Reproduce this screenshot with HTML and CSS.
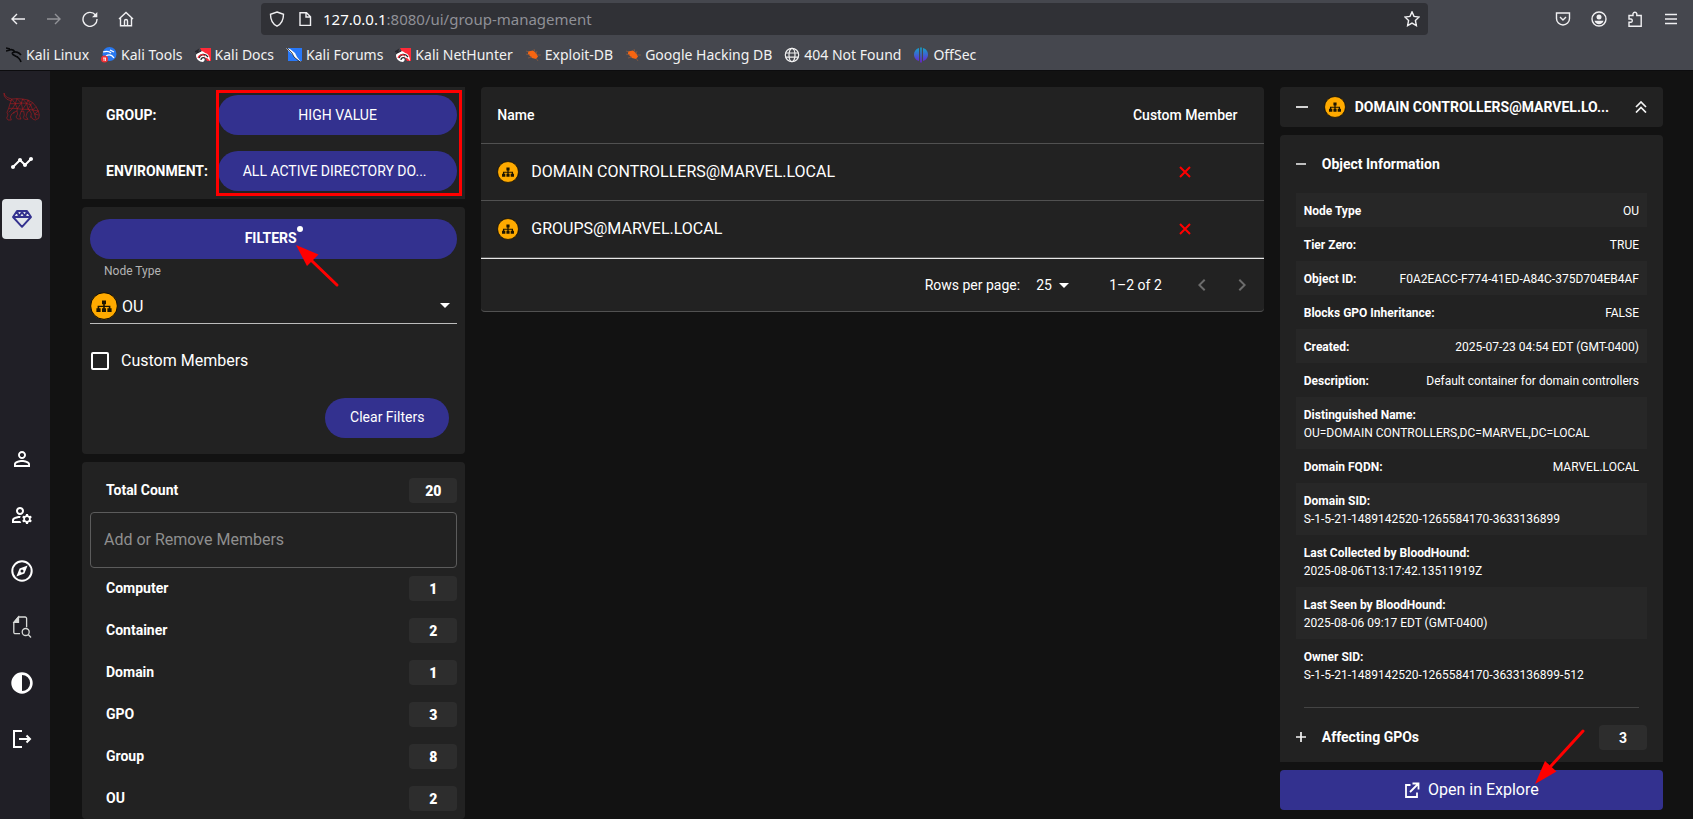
FILE: index.html
```html
<!DOCTYPE html>
<html lang="en">
<head>
<meta charset="utf-8">
<title>BloodHound - Group Management</title>
<link rel="stylesheet" href="styles.css">
</head>
<body>
<svg class="sprite" aria-hidden="true">
  <symbol id="ou" viewBox="0 0 28 28">
    <circle cx="14" cy="14" r="13.300" fill="#ffaa00" stroke="#000" stroke-width=".9"/>
    <path d="M12 8.400h4v3.800h-1.200v1.600h5.600v2.400h1.200V20h-4.200v-3.800h1.400v-1.100h-4v1.100H16V20h-4v-3.800h1.200v-1.100h-4v1.100h1.400V20H6.400v-3.800h1.200v-2.400h5.600v-1.600H12z" fill="#1c1400"/>
  </symbol>
  <symbol id="kali-docs" viewBox="0 0 16 16">
    <path d="M5 1h11v13h-4z" fill="#ff2a38"/>
    <path d="M1 8C2 4 8 3 10 6c3 0 5 4 5 8-2-3-4-4-6-3 1 1 1 3-1 4-4 0-7-3-7-7z" fill="#fff"/>
    <path d="M0 5l3-2-1 3 4-2M4 11c1-4 6-5 9-1M6 13c0-2 2-3 4-2" fill="none" stroke="#27262b" stroke-width="1.3"/>
    <path d="M3 11c1-4 5-4 7-2" fill="none" stroke="#ff2a38" stroke-width="1.2"/>
  </symbol>
  <symbol id="bug" viewBox="0 0 16 16">
    <path d="M3 4.500l5-1 3 2.500 2 3.500-2 2.500-4-1-4-4z" fill="#f76510"/>
    <path d="M1 7l4 1M3 11l4-1M9 2l1 3M12 4l-1 3M12 8h4M11 11l2 3M1 4l3 1" stroke="#8a5a40" stroke-width=".8"/>
  </symbol>
</svg>

<header class="browser">
  <div class="toolbar">
    <nav class="history" aria-label="History">
      <button class="tool" aria-label="Back"><svg viewBox="0 0 16 16"><path d="M15 8H2M7 3L2 8l5 5"/></svg></button>
      <button class="tool dim" aria-label="Forward"><svg viewBox="0 0 16 16"><path d="M1 8h13M9 3l5 5-5 5"/></svg></button>
      <button class="tool" aria-label="Reload"><svg viewBox="0 0 16 16"><path d="M13.500 4A7 7 0 1 0 15 8"/><path class="solid" d="M15.300 1v5.200H10z"/></svg></button>
      <button class="tool" aria-label="Home"><svg viewBox="0 0 16 16"><path d="M1 8l7-6.500L15 8M2.500 7v7.800h11V7M6.500 14.500V10a1.500 1.500 0 0 1 3 0v4.500"/></svg></button>
    </nav>
    <div class="urlbar">
      <svg class="tool-icon" viewBox="0 0 16 16"><path d="M8 1l6.500 2.300c0 5.500-1.500 9.500-6.500 11.900C3 12.800 1.500 8.800 1.500 3.300z"/></svg>
      <svg class="tool-icon page" viewBox="0 0 16 16"><path d="M3 1.700h6.500L13.500 5.700v8.700H3zM9 2v4h4.500"/></svg>
      <span class="url"><b>127.0.0.1</b>:8080/ui/group-management</span>
      <button class="tool star" aria-label="Bookmark"><svg viewBox="0 0 16 16"><path d="M8 .9l2 4.500 5.100.6-3.700 3.500 1 5.100L8 12.100l-4.400 2.500 1-5.100L.9 6 6 5.400z"/></svg></button>
    </div>
    <div class="browser-actions">
      <button class="tool" aria-label="Pocket"><svg viewBox="0 0 16 16"><path d="M1.500 2h13v5.500a6.500 6.500 0 0 1-13 0zM5 6l3 3 3-3"/></svg></button>
      <button class="tool" aria-label="Account"><svg viewBox="0 0 16 16"><circle cx="8" cy="8" r="7"/><circle class="solid" cx="8" cy="6" r="2.500"/><path class="solid" d="M3.500 9.700h9c-.5 2-2.500 3.500-4.500 3.500s-4-1.500-4.500-3.500z"/></svg></button>
      <button class="tool" aria-label="Extensions"><svg viewBox="0 0 16 16"><path d="M2 6V4.500h4V2.600a2 2 0 0 1 3.800 0v1.900h4.400v10.800H2v-4h2a1.700 1.700 0 0 0 0-3.300H2z"/></svg></button>
      <button class="tool" aria-label="Menu"><svg viewBox="0 0 16 16"><path d="M2 3.500h12M2 8h12M2 12.500h12"/></svg></button>
    </div>
  </div>
  <nav class="bookmarks" aria-label="Bookmarks">
    <a href="#"><svg viewBox="0 0 16 16"><path d="M0 1l4 1M0 4l4-1M3 3c3-1 5 0 6 2M6 6c3-2 7-1 9 2M6 6c1 4 7 2 9 9M9 9l3 1" fill="none" stroke="#08090b" stroke-width="1.600"/></svg>Kali Linux</a>
    <a href="#"><svg viewBox="0 0 16 16"><circle cx="8.500" cy="7" r="7" fill="#2878f0"/><path d="M2 5c3-1 6-1 8 1M5 9c3-2 6-1 8 2M9 3l4 2" fill="none" stroke="#fff" stroke-width="1.300"/><circle cx="3.500" cy="12" r="3.500" fill="#ef3035"/><path d="M2 11h3M3 11v3M4.500 11v3" stroke="#fff" stroke-width=".8"/></svg>Kali Tools</a>
    <a href="#"><svg viewBox="0 0 16 16"><use href="#kali-docs"/></svg>Kali Docs</a>
    <a href="#"><svg viewBox="0 0 16 16"><path d="M2 1h14v13H2z" fill="#2878f8"/><path d="M0 1l4 1 5 4 2 4 4 5-6-4-3-4z" fill="#fff"/><path d="M1 1l5 5 2 4 6 5" fill="none" stroke="#222" stroke-width=".8"/></svg>Kali Forums</a>
    <a href="#"><svg viewBox="0 0 16 16"><use href="#kali-docs"/></svg>Kali NetHunter</a>
    <a href="#"><svg viewBox="0 0 16 16"><use href="#bug"/></svg>Exploit-DB</a>
    <a href="#"><svg viewBox="0 0 16 16"><use href="#bug"/></svg>Google Hacking DB</a>
    <a href="#"><svg class="line" viewBox="0 0 16 16"><circle cx="8" cy="8" r="6.700"/><ellipse cx="8" cy="8" rx="3" ry="6.700"/><path d="M1.500 6h13M1.500 10.200h13"/></svg>404 Not Found</a>
    <a href="#"><svg viewBox="0 0 16 16"><defs><linearGradient id="off" x2="0" y2="1"><stop stop-color="#12a5c8"/><stop offset="1" stop-color="#6b20d8"/></linearGradient></defs><path d="M6 1v13C2.500 13 1 10 1 7.500S2.500 2 6 1zM7.200.5h1.600v15H7.200zM10 1c3.500 1 5 4 5 6.500S13.500 13 10 14z" fill="url(#off)"/></svg>OffSec</a>
  </nav>
</header>

<div class="app">
  <nav class="sidebar" aria-label="Main">
    <div class="side-group">
      <a class="side-item" href="#" aria-label="BloodHound">
        <svg class="hound" viewBox="10 67 112 90"><path d="M12 70l1 10 8 9 14 5 M12 70l3 8 8 6 12 4M35 88l16-1 17 1 16 3 14 8 10 12 7 13 3 12-2 10-10 5-8-3-5-8M35 88l-5 14-4 14-5 12 3 8-4 9 4 6h10l-3-9 4-9 9-4M39 129l12-5 2 9-5 9 5 6h10l-4-9 4-13 8-2 2 12-3 8 4 5h10l-6-9 4-13 8-5M88 121l6 11-2 12M35 88l11 14-16 0M46 102l5-15 13 13 4-12 12 13 4-10 8 15 6-7M46 102l18-2 16 1 12 5M46 102l-8 14-12 0M46 102l6 15-14-1M64 100l-12 17 16 2-4-19M80 101l-12 18 16 0-4-18M92 106l-8 13 14 2-6-15M98 121l10-10M98 121l17 3M98 121l6 12 11-9M104 133l12 3M104 133l4 14M38 116l-12 12M52 117l-1 7M68 119l-5 7M84 119l4 2"/></svg>
      </a>
      <a class="side-item" href="#" aria-label="Explore"><svg viewBox="0 0 24 24"><path d="M23 8c0 1.100-.9 2-2 2-.18 0-.35-.02-.51-.07l-3.560 3.550c.05.16.07.34.07.52 0 1.100-.9 2-2 2s-2-.9-2-2c0-.18.02-.36.07-.52l-2.550-2.550c-.16.05-.34.07-.52.07s-.36-.02-.52-.07l-4.550 4.560c.05.16.07.33.07.51 0 1.100-.9 2-2 2s-2-.9-2-2 .9-2 2-2c.18 0 .35.02.51.07l4.560-4.550C8.020 9.360 8 9.180 8 9c0-1.100.9-2 2-2s2 .9 2 2c0 .18-.02.36-.07.52l2.550 2.550c.16-.05.34-.07.52-.07s.36.02.52.07l3.550-3.560C19.020 8.350 19 8.180 19 8c0-1.100.9-2 2-2s2 .9 2 2z"/></svg></a>
      <a class="side-item active" href="#" aria-label="Group Management" aria-current="page"><svg class="gem" viewBox="0 0 24 24"><path d="M7 4h10l4 6-9 9.800L3 10zM3 10h18M7 4l2 5.500L12 5l3 4.500L17 4"/></svg></a>
    </div>
    <div class="side-group">
      <a class="side-item" href="#" aria-label="Profile"><svg viewBox="0 0 24 24"><path d="M12 5.900c1.160 0 2.100.94 2.100 2.100s-.94 2.100-2.100 2.100S9.900 9.160 9.900 8s.94-2.100 2.100-2.100m0 9c2.970 0 6.100 1.460 6.100 2.100v1.100H5.900V17c0-.64 3.130-2.100 6.100-2.100M12 4C9.790 4 8 5.790 8 8s1.790 4 4 4 4-1.790 4-4-1.790-4-4-4zm0 9c-2.670 0-8 1.340-8 4v3h16v-3c0-2.660-5.330-4-8-4z"/></svg></a>
      <a class="side-item" href="#" aria-label="Administration"><svg viewBox="0 0 24 24"><path d="M4 18v-.65c0-.34.16-.66.41-.81C6.100 15.530 8.030 15 10 15c.03 0 .05 0 .08.01.1-.7.3-1.370.59-1.980-.22-.02-.44-.03-.67-.03-2.420 0-4.680.67-6.610 1.820-.88.52-1.390 1.500-1.390 2.530V20h9.260c-.42-.6-.75-1.280-.97-2H4zM10 12c2.210 0 4-1.790 4-4s-1.790-4-4-4-4 1.790-4 4 1.790 4 4 4zm0-6c1.100 0 2 .9 2 2s-.9 2-2 2-2-.9-2-2 .9-2 2-2zM20.750 16c0-.22-.03-.42-.06-.63l1.140-1.010-1-1.730-1.450.49c-.32-.27-.68-.48-1.080-.63L18 11h-2l-.3 1.490c-.4.15-.76.36-1.080.63l-1.450-.49-1 1.730 1.140 1.010c-.03.21-.06.41-.06.63s.03.42.06.63l-1.140 1.010 1 1.730 1.450-.49c.32.27.68.48 1.080.63L16 21h2l.3-1.490c.4-.15.76-.36 1.080-.63l1.450.49 1-1.730-1.140-1.010c.03-.21.06-.41.06-.63zM17 18c-1.100 0-2-.9-2-2s.9-2 2-2 2 .9 2 2-.9 2-2 2z"/></svg></a>
      <a class="side-item" href="#" aria-label="API Explorer"><svg viewBox="0 0 24 24"><circle cx="12" cy="12" r="9.700" fill="none" stroke="#fff" stroke-width="2"/><path fill-rule="evenodd" d="M17.600 6.400l-3.200 8-8 3.200 3.200-8zM12 10.500a1.500 1.500 0 1 0 0 3 1.500 1.500 0 0 0 0-3z"/></svg></a>
      <a class="side-item" href="#" aria-label="Documentation"><svg class="doc" viewBox="0 0 24 24"><path d="M10 18.700H5.300a1.500 1.500 0 0 1-1.500-1.500V7.500L8.500 2h6.600a1.500 1.500 0 0 1 1.500 1.500v8.700"/><circle cx="15.700" cy="17" r="3.500"/><path d="M18.200 19.500l2.800 3"/><path fill="#d8dad8" d="M4 7.300L8.500 2v5.300z"/></svg></a>
      <a class="side-item" href="#" aria-label="Dark mode"><svg viewBox="0 0 24 24"><path fill-rule="evenodd" d="M12 1.300a10.700 10.700 0 1 0 0 21.400 10.700 10.700 0 0 0 0-21.400zm0 2.600a8.100 8.100 0 0 1 0 16.200z"/></svg></a>
      <a class="side-item" href="#" aria-label="Logout"><svg viewBox="0 0 24 24"><path d="M12 4H4v16h8M9 12h11M16.500 8.500L20 12l-3.500 3.500" fill="none" stroke="#fff" stroke-width="2"/></svg></a>
    </div>
  </nav>

  <main class="content">
    <section class="column">
      <div class="panel selectors">
        <div class="highlight"></div>
        <span class="selector-label">GROUP:</span>
        <button class="pill">HIGH VALUE</button>
        <span class="selector-label">ENVIRONMENT:</span>
        <button class="pill env">ALL ACTIVE DIRECTORY DO...</button>
      </div>

      <div class="panel filters">
        <button class="pill filter-toggle"><span class="badged">FILTERS<i class="dot"></i></span>
          <svg class="arrow arrow-filters" viewBox="0 0 44 44" aria-hidden="true"><path d="M41 41L16 17" stroke="red" stroke-width="3" stroke-linecap="round"/><path d="M0 1l22.500 9.500L11 22z" fill="red"/></svg>
        </button>
        <label class="field-label" for="node-type">Node Type</label>
        <div class="node-select">
          <svg class="ou-lg"><use href="#ou"/></svg>
          <select id="node-type"><option>OU</option></select>
          <svg class="caret" viewBox="0 0 10 5"><path d="M0 0h10L5 5z"/></svg>
        </div>
        <label class="check"><input type="checkbox">Custom Members</label>
        <button class="pill clear">Clear Filters</button>
      </div>

      <div class="panel counts">
        <div class="count-row"><span>Total Count</span><b>20</b></div>
        <input class="member-input" type="text" placeholder="Add or Remove Members" aria-label="Add or Remove Members">
        <div class="count-list">
          <div class="count-row"><span>Computer</span><b>1</b></div>
          <div class="count-row"><span>Container</span><b>2</b></div>
          <div class="count-row"><span>Domain</span><b>1</b></div>
          <div class="count-row"><span>GPO</span><b>3</b></div>
          <div class="count-row"><span>Group</span><b>8</b></div>
          <div class="count-row"><span>OU</span><b>2</b></div>
        </div>
      </div>
    </section>

    <section class="column wide">
      <div class="panel table-panel">
        <table>
          <thead><tr><th>Name</th><th class="custom">Custom Member</th></tr></thead>
          <tbody>
            <tr><td><div class="member"><svg class="ou"><use href="#ou"/></svg>DOMAIN CONTROLLERS@MARVEL.LOCAL</div></td><td class="custom"><svg class="cross" viewBox="0 0 12 12"><path d="M1 1l10 10M11 1L1 11"/></svg></td></tr>
            <tr><td><div class="member"><svg class="ou"><use href="#ou"/></svg>GROUPS@MARVEL.LOCAL</div></td><td class="custom"><svg class="cross" viewBox="0 0 12 12"><path d="M1 1l10 10M11 1L1 11"/></svg></td></tr>
          </tbody>
        </table>
        <div class="pagination">
          <label for="rows">Rows per page:</label>
          <div class="rows-select"><select id="rows"><option>25</option></select><svg class="caret" viewBox="0 0 10 5"><path d="M0 0h10L5 5z"/></svg></div>
          <span class="range">1–2 of 2</span>
          <button class="page-btn" aria-label="Previous page" disabled><svg viewBox="0 0 24 24"><path d="M15.400 7.400L14 6l-6 6 6 6 1.400-1.400L10.800 12z"/></svg></button>
          <button class="page-btn" aria-label="Next page" disabled><svg viewBox="0 0 24 24"><path d="M10 6L8.600 7.400l4.600 4.600-4.600 4.600L10 18l6-6z"/></svg></button>
        </div>
      </div>
    </section>

    <section class="column info">
      <div class="panel info-head">
        <button class="bare" aria-label="Collapse"><svg class="sign" viewBox="0 0 12 12"><path d="M0 6h12"/></svg></button>
        <svg class="ou"><use href="#ou"/></svg>
        <h1>DOMAIN CONTROLLERS@MARVEL.LO...</h1>
        <button class="bare" aria-label="Collapse all"><svg class="sign" viewBox="0 0 12 12"><path d="M1 6l5-5 5 5M1 11.500l5-5 5 5"/></svg></button>
      </div>
      <div class="panel details">
        <div class="section-head"><button class="bare" aria-label="Collapse section"><svg class="sign" viewBox="0 0 12 12"><path d="M0 6h10"/></svg></button><h2>Object Information</h2></div>
        <dl>
          <div><dt>Node Type</dt><dd>OU</dd></div>
          <div><dt>Tier Zero:</dt><dd>TRUE</dd></div>
          <div><dt>Object ID:</dt><dd>F0A2EACC-F774-41ED-A84C-375D704EB4AF</dd></div>
          <div><dt>Blocks GPO Inheritance:</dt><dd>FALSE</dd></div>
          <div><dt>Created:</dt><dd>2025-07-23 04:54 EDT (GMT-0400)</dd></div>
          <div><dt>Description:</dt><dd>Default container for domain controllers</dd></div>
          <div class="stack"><dt>Distinguished Name:</dt><dd>OU=DOMAIN CONTROLLERS,DC=MARVEL,DC=LOCAL</dd></div>
          <div><dt>Domain FQDN:</dt><dd>MARVEL.LOCAL</dd></div>
          <div class="stack"><dt>Domain SID:</dt><dd>S-1-5-21-1489142520-1265584170-3633136899</dd></div>
          <div class="stack"><dt>Last Collected by BloodHound:</dt><dd>2025-08-06T13:17:42.13511919Z</dd></div>
          <div class="stack"><dt>Last Seen by BloodHound:</dt><dd>2025-08-06 09:17 EDT (GMT-0400)</dd></div>
          <div class="stack"><dt>Owner SID:</dt><dd>S-1-5-21-1489142520-1265584170-3633136899-512</dd></div>
        </dl>
        <hr>
        <div class="section-head gpos"><button class="bare" aria-label="Expand section"><svg class="sign" viewBox="0 0 12 12"><path d="M0 6h10M5 1v10"/></svg></button><h2>Affecting GPOs</h2><b>3</b></div>
      </div>
      <button class="explore">
        <svg class="external" viewBox="0 0 16 16"><path d="M6.500 3H2v12h11v-4.500M8.500 1.500H14.500V7.500M14 2L6 10"/></svg>
        Open in Explore
        <svg class="arrow arrow-explore" viewBox="0 0 52 56" aria-hidden="true"><path d="M48 2L16 37" stroke="red" stroke-width="3" stroke-linecap="round"/><path d="M0 55l10-23 11.500 10.500z" fill="red"/></svg>
      </button>
    </section>
  </main>
</div>
</body>
</html>
```
FILE: styles.css
```css
* { box-sizing: border-box; }
body {
  margin: 0;
  height: 100vh;
  display: flex;
  flex-direction: column;
  overflow: hidden;
  background: #121212;
  color: #fff;
  font: 14px/20px Roboto, "Liberation Sans", sans-serif;
}
button, input, select { font: inherit; color: inherit; margin: 0; }
button { border: 0; padding: 0; background: none; cursor: pointer; }
a { color: inherit; text-decoration: none; }
svg { display: block; flex: none; }
.sprite { position: absolute; width: 0; height: 0; }

/* Browser chrome */
.browser {
  flex: none;
  background: #45474e;
  border-bottom: 1px solid #0c0c0e;
  color: #f2f2f2;
  font-family: "Noto Sans", sans-serif;
}
.toolbar { display: flex; align-items: center; height: 35px; padding: 3px 14px 0 10px; }
.history { display: flex; gap: 20px; width: 251px; flex: none; }
.tool svg, .tool-icon { width: 16px; height: 16px; fill: none; stroke: #f0f0f2; stroke-width: 1.4; }
.tool .solid { fill: #f0f0f2; stroke: none; }
.dim { opacity: .45; }
.urlbar {
  flex: 1;
  display: flex;
  align-items: center;
  height: 32px;
  padding: 0 8px;
  background: #303136;
  border-radius: 4px;
}
.page { margin-left: 12px; }
.url { flex: 1; margin-left: 10px; font-size: 15px; color: #8f9096; }
.url b { font-weight: 400; color: #fff; }
.browser-actions { display: flex; gap: 20px; margin-left: 127px; }
.bookmarks { display: flex; align-items: center; gap: 12px; height: 35px; padding: 4px 6px 0; font-size: 14px; }
.bookmarks a { display: flex; align-items: center; gap: 4px; white-space: nowrap; }
.bookmarks svg { width: 16px; height: 16px; }
.bookmarks .line { fill: none; stroke: #f0f0f0; stroke-width: 1.2; }

/* Application shell */
.app { flex: 1; min-height: 0; display: flex; }
.sidebar {
  flex: none;
  width: 50px;
  padding: 16px 2px 60px;
  display: flex;
  flex-direction: column;
  justify-content: space-between;
  background: #201f26;
}
.side-group { display: flex; flex-direction: column; gap: 16px; }
.side-item { width: 40px; height: 40px; display: grid; place-items: center; border-radius: 4px; }
.side-item svg { width: 24px; height: 24px; fill: #fff; }
.side-item .hound { width: 38px; height: 30px; fill: none; stroke: #c81a20; stroke-width: 1.5; }
.side-item .gem { fill: none; stroke: #33318f; stroke-width: 1.9; stroke-linejoin: round; }
.side-item .doc { fill: none; stroke: #d8dad8; stroke-width: 1.3; }
.active { background: #e3e7ea; }

.content {
  flex: 1;
  min-width: 0;
  display: grid;
  grid-template-columns: repeat(12, minmax(0, 1fr));
  grid-template-rows: minmax(0, 1fr);
  gap: 16px;
  padding: 16px 30px 0 32px;
}
.column { grid-column: span 3; display: flex; flex-direction: column; gap: 8px; min-height: 0; }
.wide { grid-column: span 6; }
.panel { background: #222; border-radius: 4px; flex: none; }

/* Left column */
.selectors {
  position: relative;
  display: grid;
  grid-template-columns: 128px 1fr;
  row-gap: 16px;
  align-items: center;
  padding: 8px;
  border-radius: 0;
}
.selector-label { padding-left: 16px; font-weight: 700; }
.highlight { position: absolute; inset: 3px 3px 3px 134px; border: 3px solid #f00; pointer-events: none; }
.pill { height: 40px; border-radius: 20px; background: #33318f; text-align: center; }
.env { padding-right: 6px; }
.filters { display: flex; flex-direction: column; padding: 12px 8px 16px; }
.filter-toggle { position: relative; padding: 0 6px 2px 0; font-weight: 700; }
.badged { position: relative; }
.dot { position: absolute; right: -6px; top: -4px; width: 6px; height: 6px; border-radius: 50%; background: #fff; }
.arrow { position: absolute; pointer-events: none; z-index: 2; }
.arrow-filters { left: calc(50% + 22px); top: 25px; width: 44px; height: 44px; }
.field-label { padding-left: 14px; margin-top: 2px; font-size: 12px; color: #b4b4b4; }
.node-select { position: relative; display: flex; align-items: center; height: 36px; margin-top: 7px; border-bottom: 1px solid #bdbdbd; }
.ou-lg { width: 28px; height: 28px; }
select { appearance: none; border: 0; background: none; padding: 0; outline: 0; }
.node-select select { flex: 1; font-size: 16px; padding: 2px 0 0 4px; }
.caret { position: absolute; right: 7px; width: 10px; height: 5px; fill: #fff; pointer-events: none; }
.check { display: flex; align-items: center; gap: 12px; margin: 27px 1px 0; font-size: 16px; }
.check input { appearance: none; width: 18px; height: 18px; border: 2px solid #fff; border-radius: 2px; }
.clear { align-self: flex-end; width: 124px; margin: 27px 8px 0; padding-bottom: 2px; }
.counts { padding: 16px 8px 8px; }
.count-row { display: flex; align-items: center; justify-content: space-between; height: 25px; padding-left: 16px; font-weight: 700; }
.count-row span { padding-bottom: 2px; }
.count-row b, .gpos b { width: 48px; height: 25px; line-height: 26px; border-radius: 4px; background: #2d2d2d; text-align: center; }
.member-input { display: block; width: 100%; height: 56px; margin: 9px 0 8px; padding: 0 13px 2px; font-size: 16px; background: none; border: 1px solid #5c5c5c; border-radius: 4px; }
.member-input::placeholder { color: #8f8f8f; opacity: 1; }
.count-list { display: grid; gap: 17px; }

/* Members table */
table { width: 100%; border-collapse: separate; border-spacing: 0; border-bottom: 1px solid #e8e8e8; }
th, td { height: 57px; padding: 0 16px; border-bottom: 1px solid #515151; text-align: left; font-size: 16px; }
th { font-size: 14px; font-weight: 500; }
.custom { width: 157px; padding: 0 24px; text-align: center; white-space: nowrap; }
.member { display: flex; align-items: center; gap: 12px; }
.ou { width: 22px; height: 22px; }
.cross { width: 12px; height: 12px; margin: 0 auto; stroke: #f00; stroke-width: 2; }
.pagination { display: flex; align-items: center; justify-content: flex-end; height: 53px; padding-right: 2px; border-bottom: 1px solid #515151; border-radius: 4px; }
.rows-select { position: relative; display: flex; align-items: center; width: 41px; margin: 0 32px 0 16px; }
.rows-select select { width: 41px; }
.rows-select .caret { right: 8px; }
.range { margin-right: 20px; }
.page-btn { width: 40px; height: 40px; display: grid; place-items: center; }
.page-btn svg { width: 24px; height: 24px; fill: #6c6c6c; }

/* Entity panel */
.info { padding-bottom: 9px; }
.info-head { display: flex; align-items: center; height: 40px; padding: 0 16px; }
.info-head h1 { flex: 1; min-width: 0; margin: 0 16px 0 9px; font-size: 14px; font-weight: 700; overflow: hidden; text-overflow: ellipsis; white-space: nowrap; }
.info-head .ou { margin-left: 16px; }
.sign { width: 12px; height: 12px; fill: none; stroke: #f4f4f4; stroke-width: 1.7; }
.details { flex: 1; min-height: 0; overflow: hidden; padding: 0 16px; border-radius: 4px 4px 0 0; }
.section-head { display: flex; align-items: center; height: 58px; }
.section-head h2 { flex: 1; margin: 0 0 0 14px; font-size: 14px; font-weight: 700; }
.bare { flex: none; }
dl { margin: 0; font-size: 12px; line-height: 18px; }
dl div { display: flex; justify-content: space-between; padding: 9px 8px 7px; }
dl div:nth-child(odd) { background: #272727; }
dl .stack { display: block; }
dt { font-weight: 700; }
dd { margin: 0; }
hr { margin: 16px 8px 0; border: 0; border-top: 1px solid #444; }
.explore { position: relative; flex: none; display: flex; align-items: center; justify-content: center; gap: 8px; height: 40px; border-radius: 4px; background: #33318f; font-size: 16px; }
.external { width: 16px; height: 16px; fill: none; stroke: #fff; stroke-width: 1.8; }
.arrow-explore { left: calc(50% + 64px); top: -41px; width: 52px; height: 56px; }
```
